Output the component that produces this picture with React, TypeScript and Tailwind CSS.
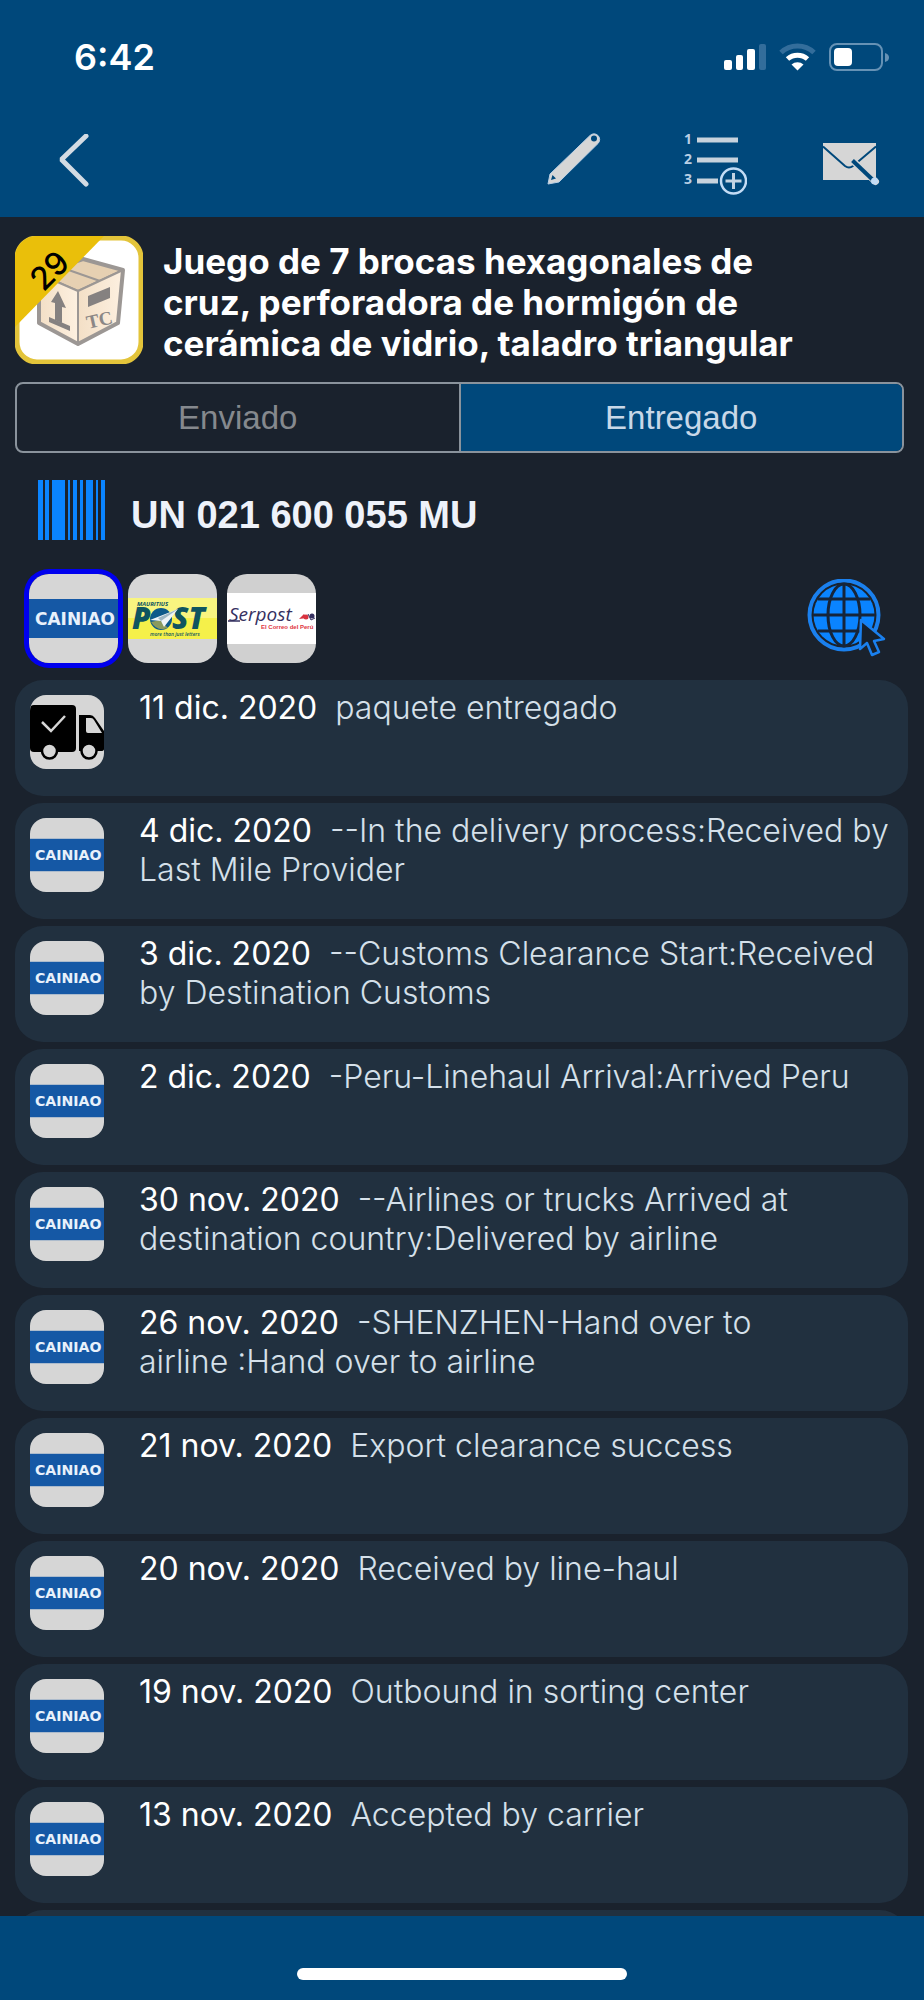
import { useState } from "react";

type Event = {
  date: string;
  text: string;
  delivered?: boolean;
};

const events: Event[] = [
  { date: "11 dic. 2020", text: "paquete entregado", delivered: true },
  {
    date: "4 dic. 2020",
    text: "--In the delivery process:Received by Last Mile Provider",
  },
  {
    date: "3 dic. 2020",
    text: "--Customs Clearance Start:Received by Destination Customs",
  },
  { date: "2 dic. 2020", text: "-Peru-Linehaul Arrival:Arrived Peru" },
  {
    date: "30 nov. 2020",
    text: "--Airlines or trucks Arrived at destination country:Delivered by airline",
  },
  {
    date: "26 nov. 2020",
    text: "-SHENZHEN-Hand over to airline\u00a0:Hand\u00a0over to airline",
  },
  { date: "21 nov. 2020", text: "Export clearance success" },
  { date: "20 nov. 2020", text: "Received by line-haul" },
  { date: "19 nov. 2020", text: "Outbound in sorting center" },
  { date: "13 nov. 2020", text: "Accepted by carrier" },
];

function StatusIcons() {
  return (
    <div className="flex items-center gap-[13px]">
      <svg className="h-7 w-[42px]" viewBox="0 0 42 28" fill="#fff">
        <rect x="0" y="17" width="8" height="10" rx="2" />
        <rect x="12" y="12" width="7" height="15" rx="2" />
        <rect x="23" y="6" width="8" height="21" rx="2" />
        <rect x="35" y="1" width="7" height="26" rx="2" fill="#336d9b" />
      </svg>
      <svg className="h-7 w-[37px]" viewBox="0 0 37 28" fill="none">
        <path d="M2 9.5a24 24 0 0 1 33 0" stroke="#336d9b" strokeWidth="5" />
        <path d="M8.5 16a15 15 0 0 1 20 0" stroke="#fff" strokeWidth="5" />
        <path d="M12.5 21.5a9 9 0 0 1 12 0l-6 6z" fill="#fff" />
      </svg>
      <svg className="h-7 w-[60px]" viewBox="0 0 60 28" fill="none">
        <rect x="1" y="1" width="52" height="26" rx="7" stroke="#6692b5" strokeWidth="2" />
        <rect x="5" y="5" width="18" height="18" rx="4" fill="#fff" />
        <path d="M56 10v9q4-1 4-4.500t-4-4.500z" fill="#6692b5" />
      </svg>
    </div>
  );
}

function PencilIcon() {
  return (
    <svg className="h-[68px] w-16" viewBox="0 0 64 68">
      <path
        d="M2 56 4 46 44 7.500a5.500 5.500 0 0 1 8 8L13 54z"
        fill="#d6d6d6"
        stroke="#b9cfe4"
        strokeLinejoin="round"
      />
      <circle cx="48" cy="10.500" r="3" fill="#00487b" />
      <path d="m5 52 1.500-5 3.500 3.500z" fill="#00487b" />
    </svg>
  );
}

function ListIcon() {
  return (
    <svg className="h-[68px] w-16" viewBox="0 0 64 68">
      <g
        fill="#b9cfe4"
        fontFamily="'Open Sans', sans-serif"
        fontSize="14"
        fontWeight="700"
      >
        <text x="1" y="16">1</text>
        <text x="1" y="36">2</text>
        <text x="1" y="56">3</text>
      </g>
      <path d="M14 12h41M14 32h41M14 53h21" stroke="#c8d3dd" strokeWidth="5" />
      <circle cx="50.500" cy="53" r="12.500" fill="none" stroke="#c3dcf5" strokeWidth="2.500" />
      <path d="M50.500 45v16M42.500 53h16" stroke="#c3d3e2" strokeWidth="3" />
    </svg>
  );
}

function MailIcon() {
  return (
    <svg className="h-[68px] w-16" viewBox="0 0 64 68" fill="none">
      <path d="M3 15h53v37H3z" fill="#d6d6d6" />
      <path d="m3 18.500 22 19.500q4 3 8 0L56 18.500" stroke="#00487b" strokeWidth="2" />
      <path d="m33.500 33.500 22 20" stroke="#d6d6d6" strokeWidth="7" strokeLinecap="round" />
      <path d="m32.500 32.500 21 20" stroke="#00487b" strokeWidth="4" />
      <circle cx="54.500" cy="53" r="3.500" fill="#c3dcf5" />
    </svg>
  );
}

function PackageThumb() {
  return (
    <svg className="size-32 shrink-0" viewBox="0 0 128 128">
      <defs>
        <linearGradient id="box" x1="0" y1="0" x2="1" y2="0">
          <stop offset="0" stopColor="#f3dfc6" />
          <stop offset="1" stopColor="#fdf0e0" />
        </linearGradient>
      </defs>
      <rect x="2" y="2" width="124" height="124" rx="20" fill="#fff" stroke="#e3c43a" strokeWidth="5" />
      <g stroke="#9c9794" strokeLinejoin="round">
        <path d="m68 23 40 11-45 21-39-17z" fill="#e6d0b2" strokeWidth="2" />
        <path d="m24 38 39 17v53L24 87z" fill="url(#box)" strokeWidth="2" />
        <path d="m63 55 45-21-5 53-40 21z" fill="url(#box)" strokeWidth="2" />
        <path d="m45 31 40 14" strokeWidth="2" />
        <path d="m68 23 40 11-5 53-40 21-39-21V38z" fill="none" strokeWidth="4" />
      </g>
      <path d="m43 55 8 17-4-1v16l-7-3V67l-4-1z" fill="#858180" />
      <path d="m34 81 21 9v5l-21-9z" fill="#858180" />
      <path d="m73 60 22-9v11l-22 9z" fill="#858180" />
      <text
        x="73"
        y="93"
        fontFamily="'Liberation Serif', serif"
        fontSize="19"
        fontWeight="700"
        fill="#8b8786"
        transform="rotate(-13 73 93)"
      >
        TC
      </text>
      <path d="M0 91V22A22 22 0 0 1 22 0h67z" fill="#eabf0a" />
      <text
        x="34"
        y="46"
        textAnchor="middle"
        fontFamily="Inter, sans-serif"
        fontSize="32"
        fontWeight="500"
        fill="#000"
        transform="rotate(-45 34 34)"
      >
        29
      </text>
    </svg>
  );
}

function BarcodeIcon() {
  return (
    <svg className="h-[60px] w-[67px]" viewBox="0 0 67 60" fill="#0a84ff">
      <path d="M0 0h5v60H0zM7 0h4v60H7zM14 0h13v60H14zM30 0h2v60h-2zM35 0h4v60h-4zM42 0h3v60h-3zM48 0h7v60h-7zM58 0h2v60h-2zM63 0h4v60h-4z" />
    </svg>
  );
}

function CainiaoLogo() {
  return (
    <svg className="size-full" viewBox="0 0 89 89" role="img" aria-label="Cainiao">
      <rect width="89" height="89" fill="#d6d6d6" />
      <rect y="25" width="89" height="39" fill="#1558a5" />
      <text
        x="46"
        y="51"
        textAnchor="middle"
        fontFamily="'DejaVu Sans', sans-serif"
        fontSize="17"
        fontWeight="700"
        fill="#e8f1fb"
      >
        CAINIAO
      </text>
    </svg>
  );
}

function MauritiusPostLogo() {
  return (
    <svg className="size-full" viewBox="0 0 89 89" role="img" aria-label="Mauritius Post">
      <rect width="89" height="89" fill="#d6d6d6" />
      <rect y="24" width="89" height="41" fill="#f5f04a" />
      <rect y="24" width="89" height="20" fill="#f8f580" />
      <g fontFamily="'Open Sans', sans-serif" fontStyle="italic" fontWeight="700" fill="#0f5560">
        <text x="9" y="32" fontSize="6">MAURITIUS</text>
        <text x="4" y="55" fontSize="30" fontWeight="800">P</text>
        <text x="44" y="55" fontSize="30" fontWeight="800">ST</text>
        <text x="22" y="62" fontSize="5" fontWeight="600">more than just letters</text>
      </g>
      <circle cx="33" cy="45" r="11" fill="#0d5a8a" />
      <path d="M23 48q6 10 17 6l-8-8z" fill="#8a9a5e" />
      <path d="M22 46 50 35 36 53l-3-6z" fill="#eef4f7" />
      <path d="m33 47 17-12-20 9z" fill="#9db7c4" />
    </svg>
  );
}

function SerpostLogo() {
  return (
    <svg className="size-full" viewBox="0 0 89 89" role="img" aria-label="Serpost">
      <rect width="89" height="89" fill="#d0d0d0" />
      <rect y="19" width="89" height="51" fill="#fff" />
      <text
        x="2"
        y="47"
        fontFamily="'Open Sans', sans-serif"
        fontStyle="italic"
        fontSize="19"
        fontWeight="500"
        fill="#35305f"
      >
        Serpost
      </text>
      <path d="M1 47h12" stroke="#35305f" strokeWidth="1.500" />
      <path d="m72 45 5-5 3 4z" fill="#d8323f" />
      <circle cx="79" cy="43" r="2.500" fill="#d8323f" />
      <circle cx="85" cy="42" r="2.500" fill="#35305f" />
      <path d="m81 40 3 6 4-2" fill="none" stroke="#35305f" />
      <text
        x="34"
        y="55"
        fontFamily="'Liberation Sans', sans-serif"
        fontSize="6"
        fontWeight="700"
        fill="#e0343f"
      >
        El Correo del Perú
      </text>
    </svg>
  );
}

function TruckIcon() {
  return (
    <svg className="size-full" viewBox="0 0 74 74">
      <rect width="74" height="74" fill="#d6d6d6" />
      <rect y="10" width="46" height="47" rx="4" />
      <path d="M49 20h11q3 0 5 3l9 13v18q0 2-3 2H49z" />
      <path d="M56 23h5q2 0 3 2l8 13H58q-2 0-2-2z" fill="#d6d6d6" />
      <path d="m12 27 9 9 14-15" fill="none" stroke="#d6d6d6" strokeWidth="2.500" />
      <circle cx="19.500" cy="56" r="7.500" fill="#d6d6d6" stroke="#000" strokeWidth="2.500" />
      <circle cx="59" cy="56" r="7.500" fill="#d6d6d6" stroke="#000" strokeWidth="2.500" />
    </svg>
  );
}

function GlobeIcon() {
  return (
    <svg className="h-20 w-[84px]" viewBox="0 3 84 80" fill="none">
      <circle cx="40" cy="39" r="34.500" stroke="#1a80ee" strokeWidth="4" />
      <circle cx="40" cy="39" r="30.500" fill="#0a84ff" />
      <g stroke="#16253a" strokeWidth="3">
        <path d="M40 8v62M9 39h62M14 23h52M14 55h52" />
        <ellipse cx="40" cy="39" rx="16" ry="31" />
      </g>
      <path
        d="m57 44 23 19-10 2 5 11-7 3-5-12-7 6z"
        fill="#16202c"
        stroke="#1a80ee"
        strokeWidth="2.500"
        strokeLinejoin="round"
      />
    </svg>
  );
}

const carriers = [
  { id: "cainiao", Logo: CainiaoLogo },
  { id: "mauritius", Logo: MauritiusPostLogo },
  { id: "serpost", Logo: SerpostLogo },
];

export default function App() {
  const [tab, setTab] = useState("Entregado");
  const [carrier, setCarrier] = useState("cainiao");

  return (
    <div className="flex h-screen flex-col bg-[#1a222d] font-['Inter',sans-serif] text-white">
      <header className="shrink-0 bg-[#00487b] pb-1.5">
        <div className="flex h-[113px] items-center justify-between pr-[35px] pl-[74px]">
          <span className="text-[36px] font-semibold">6:42</span>
          <StatusIcons />
        </div>
        <nav className="flex h-[98px] items-center justify-between pr-10 pl-14">
          <button aria-label="Atrás">
            <svg className="h-14 w-9" viewBox="0 2 36 56" fill="none">
              <path
                d="M30 4 5.500 27.500 30 52"
                stroke="#d3dbe3"
                strokeWidth="5"
                strokeLinecap="round"
                strokeLinejoin="bevel"
              />
            </svg>
          </button>
          <div className="flex gap-[73px]">
            <button aria-label="Editar">
              <PencilIcon />
            </button>
            <button aria-label="Añadir a la lista">
              <ListIcon />
            </button>
            <button aria-label="Enviar correo">
              <MailIcon />
            </button>
          </div>
        </nav>
      </header>

      <main className="flex min-h-0 flex-1 flex-col overflow-hidden pt-[19px]">
        <section className="flex items-end gap-5 px-[15px]">
          <PackageThumb />
          <h1 className="max-w-[660px] text-[35px] leading-[41px] font-bold">
            Juego de 7 brocas hexagonales de cruz, perforadora de hormigón de
            cerámica de vidrio, taladro triangular
          </h1>
        </section>

        <div className="mt-[18px] mr-5 ml-[15px] flex h-[71px] shrink-0 overflow-hidden rounded-lg border-2 border-[#8a939c] font-['Liberation_Sans',sans-serif] text-[33px]">
          {["Enviado", "Entregado"].map((name) => (
            <button
              key={name}
              onClick={() => setTab(name)}
              className={
                tab === name
                  ? "flex-1 border-l-2 border-[#8a939c] bg-[#00487b] text-[#c8d8e8] first:border-l-0"
                  : "flex-1 text-[#85898e]"
              }
            >
              {name}
            </button>
          ))}
        </div>

        <div className="mt-[27px] flex items-end gap-[26px] pl-[38px]">
          <BarcodeIcon />
          <p className="font-['Liberation_Sans',sans-serif] text-[38px] leading-[50px] font-bold text-[#eef2fa]">
            UN 021 600 055 MU
          </p>
        </div>

        <div className="mt-[34px] flex items-center justify-between pr-9 pl-[29px]">
          <div className="flex gap-[10px]">
            {carriers.map(({ id, Logo }) => (
              <button
                key={id}
                onClick={() => setCarrier(id)}
                className={
                  carrier === id
                    ? "size-[89px] overflow-hidden rounded-[20px] ring-5 ring-[#0000ee]"
                    : "size-[89px] overflow-hidden rounded-[20px]"
                }
              >
                <Logo />
              </button>
            ))}
          </div>
          <button aria-label="Abrir sitio web">
            <GlobeIcon />
          </button>
        </div>

        <ul className="mt-[17px] flex min-h-0 flex-1 flex-col gap-[7px] overflow-hidden pr-4 pl-[15px]">
          {events.map(({ date, text, delivered }) => (
            <li
              key={date}
              className="flex min-h-[116px] shrink-0 gap-[35px] rounded-[28px] bg-[#21303f] pr-4 pl-[15px]"
            >
              <div className="mt-[15px] size-[74px] shrink-0 overflow-hidden rounded-2xl">
                {delivered ? <TruckIcon /> : <CainiaoLogo />}
              </div>
              <p className="pt-2 text-[32px] leading-[39px] font-light text-[#d5e0ea]">
                <span className="font-normal text-white">{date}</span>
                &nbsp; {text}
              </p>
            </li>
          ))}
          {/* next row, scrolled under the bottom bar */}
          <li className="min-h-[116px] shrink-0 rounded-[28px] bg-[#21303f]" />
        </ul>
      </main>

      <footer className="flex h-[84px] shrink-0 items-end justify-center bg-[#00487b] pb-5">
        <div className="h-3 w-[330px] rounded-full bg-white" />
      </footer>
    </div>
  );
}
